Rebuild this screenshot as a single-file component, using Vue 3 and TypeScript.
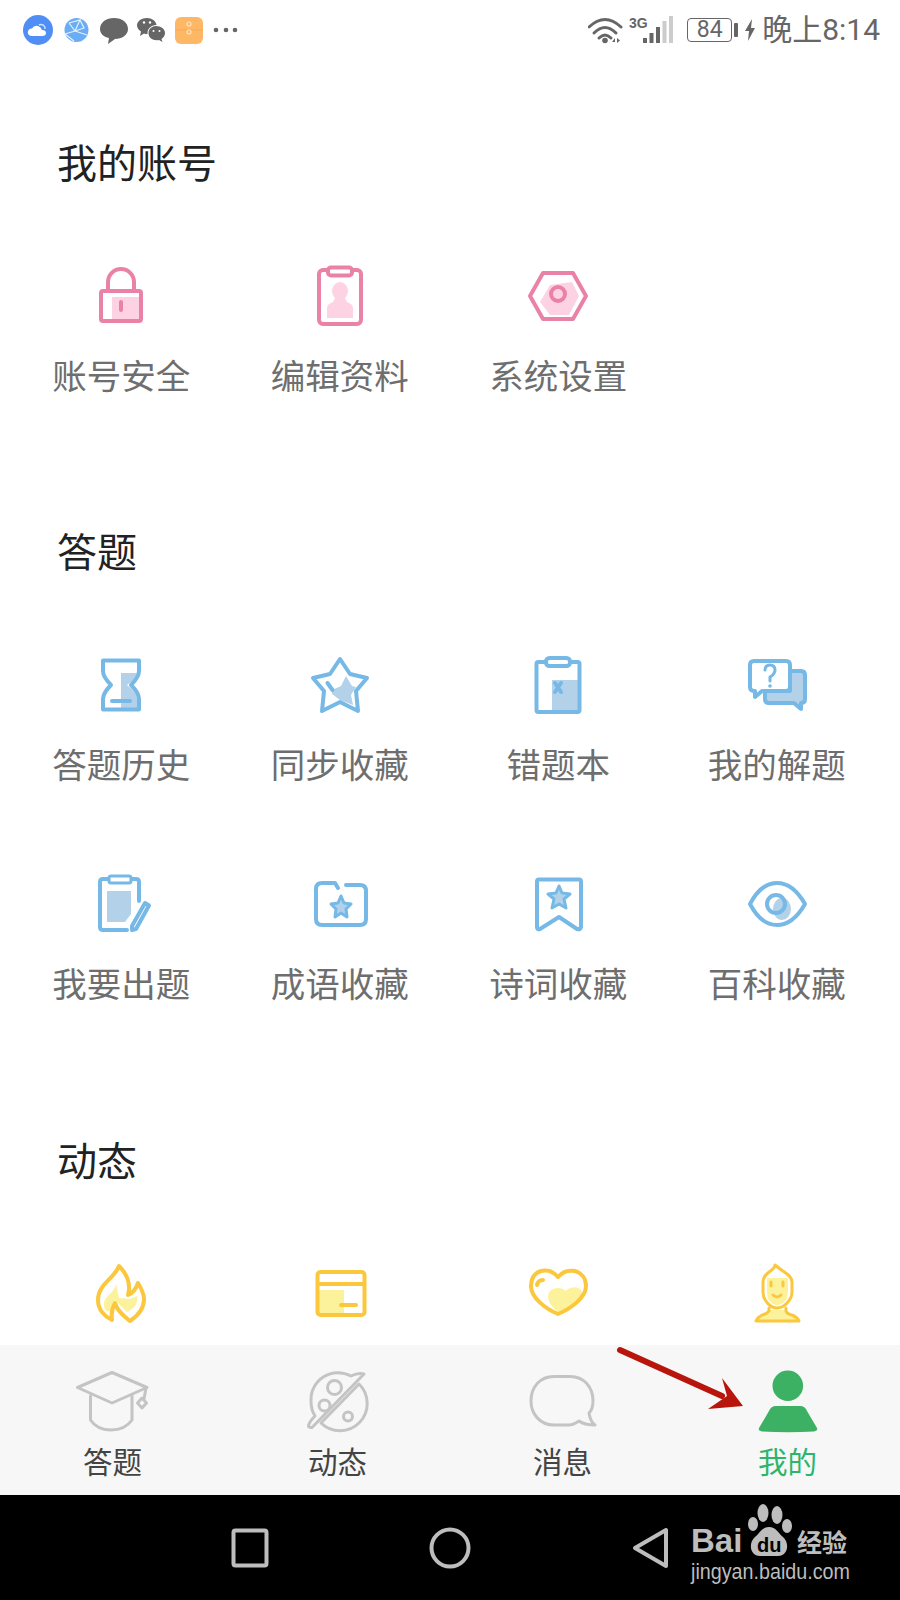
<template>
  <div class="phone">
    <div class="status-bar">
      <svg width="30" height="30" viewBox="0 0 30 30">
        <circle cx="15" cy="15" r="15" fill="#4f8ff5" />
        <path d="M8 21 Q4 20 5 16 Q6 13 9 13.500 Q11 10 15 11 Q18 12 19 15 Q23 15 23 18 Q23 21 19 21 Z" fill="#fff" />
        <path d="M16 10 A4 4 0 0 1 22 14" fill="none" stroke="#cfe0fb" stroke-width="1.500" />
      </svg>
      <svg width="30" height="30" viewBox="0 0 30 30">
        <circle cx="15.500" cy="15" r="12" fill="#6badf5" />
        <path d="M8 8 L19 5 L14 16 L26 20 M14 16 L4 19 L13 26 M19 5 L23 13 L14 16 M8 8 L14 16" fill="none" stroke="#e3f0fd" stroke-width="1.200" />
      </svg>
      <svg width="30" height="30" viewBox="0 0 30 30">
        <path d="M15 3 C23 3 29 7.500 29 14 C29 20 23 24 16 24 L9 29 L10 23 C4 22 1 18 1 14 C1 7.500 7 3 15 3 Z" fill="#666" />
      </svg>
      <svg width="28" height="30" viewBox="0 0 28 30">
        <path d="M10 3 C15 3 19 6 19.500 10 C14 10 10 14 10.500 19 C9 19 8 19 7 18.500 L3 21 L4 16.500 C1.500 15 0 12.500 0 10.500 C0 6 4.500 3 10 3 Z" fill="#666" />
        <path d="M19 11 C24 11 28 14 28 18 C28 20.500 26.500 22.500 24.500 24 L25.500 27 L22 25 C16 26 11.500 23 11.500 18 C11.500 14 15 11 19 11 Z" fill="#666" />
        <circle cx="7" cy="7.500" r="1.200" fill="#fff" /><circle cx="13" cy="7.500" r="1.200" fill="#fff" />
        <circle cx="16.500" cy="16" r="1" fill="#fff" /><circle cx="22.500" cy="16" r="1" fill="#fff" />
      </svg>
      <svg width="30" height="30" viewBox="0 0 30 30">
        <rect x="2" y="2" width="28" height="27" rx="6" fill="#fdb765" />
        <path d="M2 15 H30" stroke="#f7aa52" stroke-width="1" />
        <circle cx="16" cy="9" r="2" fill="none" stroke="#ffe3bf" stroke-width="1.200" />
        <circle cx="16" cy="17" r="2" fill="none" stroke="#ffe3bf" stroke-width="1.200" />
      </svg>
      <svg width="30" height="30" viewBox="0 0 30 30">
        <circle cx="5" cy="15" r="2.300" fill="#666" /><circle cx="15" cy="15" r="2.300" fill="#666" /><circle cx="24" cy="15" r="2.300" fill="#666" />
      </svg>

      <div class="status-right">
        <svg width="36" height="30" viewBox="0 0 36 30">
          <g fill="none" stroke="#666" stroke-width="3" stroke-linecap="round">
            <path d="M1 12 Q17 -3 33 12" />
            <path d="M6 18 Q17 7 28 18" />
            <path d="M11 23 Q17 17 23 23" />
          </g>
          <circle cx="17" cy="25.500" r="2.800" fill="#666" />
          <path d="M24 27 L27 23 V27 Z M29 23 L32 25.500 L29 28 Z" fill="#666" />
        </svg>
        <svg class="signal" width="46" height="30" viewBox="0 0 46 30">
          <text x="0" y="13" class="net-type">3G</text>
          <g fill="#666">
            <rect x="14" y="23" width="4" height="5" />
            <rect x="20.500" y="18" width="4" height="10" />
            <rect x="27" y="12" width="4" height="16" />
          </g>
          <g fill="#ccc">
            <rect x="33.500" y="6" width="4" height="22" />
            <rect x="40" y="1" width="4" height="27" />
          </g>
        </svg>
        <div class="battery">84</div>
        <div class="battery-nub"></div>
        <svg class="bolt" width="10" height="22" viewBox="0 0 10 22">
          <path d="M7 0 L0 12 H4 L3 22 L10 9 H6 Z" fill="#666" />
        </svg>
        <span class="clock">晚上8:14</span>
      </div>
    </div>

    <div class="content">
      <section class="section pink">
        <h2 class="section-title">我的账号</h2>
        <div class="grid">
          <div class="item">
            <svg class="icon" viewBox="0 0 64 64">
              <rect class="soft" x="23" y="33" width="29" height="24" />
              <path class="line" d="M19 27 V18 A13 13 0 0 1 45 18 V27" />
              <rect class="line" x="12" y="27" width="40" height="30" rx="2" />
              <path class="line" d="M32 38 V46" />
            </svg>
            <span class="label">账号安全</span>
          </div>
          <div class="item">
            <svg class="icon" viewBox="0 0 64 64">
              <rect class="line" x="11" y="6" width="42" height="54" rx="4" />
              <rect class="line white" x="20" y="3.500" width="24" height="8" rx="3" />
              <ellipse class="soft" cx="32" cy="27" rx="8" ry="9" />
              <path class="soft" d="M19 54 V44 Q19 40 25 38 L27 34 H37 L39 38 Q45 40 45 44 V54 Z" />
            </svg>
            <span class="label">编辑资料</span>
          </div>
          <div class="item">
            <svg class="icon" viewBox="0 0 64 64">
              <path class="soft" d="M14 38 L24 21 L46 18 L53 32 L43 51 L24 51 Z" />
              <polygon class="line" points="4,32 17,9 47,9 60,32 47,55 17,55" />
              <circle class="line" cx="32" cy="30" r="7" />
            </svg>
            <span class="label">系统设置</span>
          </div>
        </div>
      </section>

      <section class="section blue">
        <h2 class="section-title">答题</h2>
        <div class="grid">
          <div class="item">
            <svg class="icon" viewBox="0 0 64 64">
              <path class="soft" d="M32 20 H48 Q47 26 38 32 Q48 40 48 46 V55 H32 Z" />
              <path class="line" d="M14 7.500 H50 V18 Q50 24 42 32 Q50 40 50 46 V56.500 H14 V46 Q14 40 22 32 Q14 24 14 18 Z" />
              <path class="line" d="M23 48 H41" />
            </svg>
            <span class="label">答题历史</span>
          </div>
          <div class="item">
            <svg class="icon" viewBox="0 0 64 64">
              <polygon class="soft" points="38,23 44,33 48,34 43,42 45,52 32,47 24,41 24,37 33,33" />
              <polygon class="line" points="32,6 42,21 59,25 48,38 50,58 32,49 14,58 16,38 5,25 22,21" />
              <path class="line" d="M19.500 30 L24.500 37" />
            </svg>
            <span class="label">同步收藏</span>
          </div>
          <div class="item">
            <svg class="icon" viewBox="0 0 64 64">
              <rect class="soft" x="26" y="27" width="27" height="31" />
              <rect class="line" x="10.500" y="9" width="43" height="50" rx="2" />
              <rect class="line white" x="20" y="5" width="24" height="8" rx="3.500" />
              <path class="line" d="M29 30 L35 39 M35 30 L29 39" />
            </svg>
            <span class="label">错题本</span>
          </div>
          <div class="item">
            <svg class="icon" viewBox="0 0 64 64">
              <path class="line fill" d="M45 18 H56 Q60 18 60 22 V46 Q60 50 56 50 V56 L49 50 H24 Q20 50 20 46 V38 H45 Z" />
              <path class="line white" d="M9 8 H41 Q45 8 45 12 V34 Q45 38 41 38 H17 L10 44 V38 Q5 38 5 34 V12 Q5 8 9 8 Z" />
              <path class="line thin" d="M20 17 Q20 12 25 12 Q30 12 30 17 Q30 21 25 24 V28" />
              <circle cx="25" cy="33" r="1.800" fill="#76b9e6" />
            </svg>
            <span class="label">我的解题</span>
          </div>
          <div class="item">
            <svg class="icon" viewBox="0 0 64 64">
              <path class="soft" d="M18 19 H42 V42 L36 50 H18 Z" />
              <path class="line" d="M50 29 V10 Q50 7 47 7 H14 Q11 7 11 10 V55 Q11 58 14 58 H38" />
              <rect class="line white thin" x="20" y="4" width="22" height="7" rx="2" />
              <path class="line" d="M56 31 L60 33.500 L47 57 L43 58 L43 54 Z" />
            </svg>
            <span class="label">我要出题</span>
          </div>
          <div class="item">
            <svg class="icon" viewBox="0 0 64 64">
              <path class="line" d="M30 16 L27 11 H14 Q8 11 8 17 V47 Q8 53 14 53 H52 Q58 53 58 47 V19 Q58 13 52 13 H38" />
              <polygon class="line fill thin" points="33,24 36,31 43,32 38,37 39,45 33,41 27,45 28,37 23,32 30,31" />
            </svg>
            <span class="label">成语收藏</span>
          </div>
          <div class="item">
            <svg class="icon" viewBox="0 0 64 64">
              <path class="line" d="M13 7.500 H53 Q55 7.500 55 9.500 V55 Q54 58 51 57 L33 45 L14 57 Q11 58 11 55 V9.500 Q11 7.500 13 7.500 Z" />
              <polygon class="line fill thin" points="33,14 36,21 44,22 38,27 40,36 33,32 26,36 28,27 22,22 30,21" />
            </svg>
            <span class="label">诗词收藏</span>
          </div>
          <div class="item">
            <svg class="icon" viewBox="0 0 64 64">
              <path class="line" d="M5 32 Q16 11 32 11 Q48 11 60 32 Q48 53 32 53 Q16 53 5 32 Z" />
              <ellipse class="soft" cx="37" cy="37" rx="9" ry="11" />
              <circle class="line" cx="31" cy="32" r="9" />
            </svg>
            <span class="label">百科收藏</span>
          </div>
        </div>
      </section>

      <section class="section yellow last">
        <h2 class="section-title">动态</h2>
        <div class="grid">
          <div class="item">
            <svg class="icon" viewBox="0 0 64 64">
              <path class="soft" d="M27 22 C25 32 14 34 15 44 C16 50 20 50 24 48 L26 38 L38 50 C46 46 49 42 48 34 L41 37 L30 36 Z" />
              <path class="line" d="M30 4 C26 16 9 22 9 38 C9 48 16 55 23 58 C22 51 23 46 26 41 C28 49 35 54 41 59 C50 53 55 46 55 37 C55 31 52 26 49 21 C47 27 44 31 39 33 C42 22 38 12 30 4 Z" />
            </svg>
          </div>
          <div class="item">
            <svg class="icon" viewBox="0 0 64 64">
              <rect class="soft" x="11" y="28" width="25" height="24" />
              <rect class="line" x="9.500" y="10" width="47" height="43" rx="3" />
              <path class="line" d="M10 22 H56 M33 43 H48" />
            </svg>
          </div>
          <div class="item">
            <svg class="icon" viewBox="0 0 64 64">
              <path class="soft" d="M40 29 C36 25 28 25 24 29 C20 34 22 42 32 50 C42 47 57 38 56 30 C54 24 44 24 40 29 Z" />
              <path class="line" d="M32 15 C27 9 20 8 15 9 C8 11 5 17 5 24 C5 36 20 47 32 52 C44 47 60 36 60 24 C60 17 56 11 49 9 C43 8 37 9 32 15 Z" />
              <path class="line" d="M11 23 Q12 18 17 18" />
            </svg>
          </div>
          <div class="item">
            <svg class="icon" viewBox="0 0 64 64">
              <path class="soft" d="M24 48 Q22 52 17 54 Q13 55 12 58 H53 Q52 55 47 54 Q42 52 41 48 Z" />
              <path class="soft" d="M22 16 H43 V30 C43 38 38 43 32 43 C26 43 22 38 22 30 Z" />
              <path class="line thin" d="M30 3 C30 9 18 10 18 20 V30 C18 38 25 46 32 46 C39 46 47 38 47 30 V20 C47 13 38 10 30 3 Z" />
              <path class="line thin" d="M24 46 V49 Q22 52 17 53 Q13 55 11 59 H54 Q52 55 47 53 Q42 52 41 49 V46" />
              <path class="line thin" d="M26 20 V24 M38 20 V24 M28 33 Q32 37 36 33" />
            </svg>
          </div>
        </div>
      </section>
    </div>

    <nav class="tab-bar">
      <div class="tab">
        <svg class="tab-icon" viewBox="0 0 80 64">
          <g class="tab-line">
            <path d="M39 2.500 L74 17.500 L39 33 L4.500 17.500 Z" />
            <path d="M17.500 26 V50 Q24 60 38 60 Q52 60 59 50 V26" />
            <path d="M73 18 L71 29" />
            <path d="M69 28 L73.500 33 L69 38 L64.500 33 Z" />
          </g>
        </svg>
        <span class="tab-label">答题</span>
      </div>
      <div class="tab">
        <svg class="tab-icon" viewBox="0 0 80 64">
          <g class="tab-line">
            <path d="M66 4 Q60 2.500 53 6 A27 27 0 0 0 13 31 Q13 40 17 46 Q11 52 10.500 56 Q11 58 14 57.500 Z" />
            <path d="M61 14 A27 27 0 0 1 23 53 Z" />
            <circle cx="36.500" cy="17.500" r="7" />
            <circle cx="26.500" cy="35.500" r="5.500" />
            <circle cx="50" cy="46.500" r="4.500" />
          </g>
        </svg>
        <span class="tab-label">动态</span>
      </div>
      <div class="tab">
        <svg class="tab-icon" viewBox="0 0 80 64">
          <path class="tab-line" d="M31 6.500 H47 C61 6.500 70 17 70 31 C70 36 69 40 66 43 C67 49 69 53 72 55 C66 55 60 54 56 51 C53 53 50 55 46 55 H31 C17 55 8 44 8 31 C8 17 17 6.500 31 6.500 Z" />
        </svg>
        <span class="tab-label">消息</span>
      </div>
      <div class="tab active">
        <svg class="tab-icon" viewBox="0 0 80 64">
          <circle cx="39.800" cy="15.700" r="15.300" fill="#3cb163" />
          <path d="M28 36 H52 Q57 36 59 41 L69 58 Q70 61 66 61.500 Q40 63 14 61.500 Q10 61 11 58 L21 41 Q23 36 28 36 Z" fill="#3cb163" />
        </svg>
        <span class="tab-label">我的</span>
      </div>
    </nav>

    <div class="system-nav">
      <svg width="60" height="60" viewBox="0 0 60 60">
        <rect x="13.500" y="12.500" width="33" height="35" rx="2" class="nav-line" />
      </svg>
      <svg width="60" height="60" viewBox="0 0 60 60">
        <circle cx="30" cy="30" r="18.500" class="nav-line" />
      </svg>
      <svg width="60" height="60" viewBox="0 0 60 60">
        <path d="M15 30 L46 12 V48 Z" class="nav-line" />
      </svg>
    </div>

    <!-- annotation drawn over the screenshot -->
    <svg class="arrow" width="150" height="80" viewBox="0 0 150 80">
      <path d="M10 10 L112 56" stroke="#b8160c" stroke-width="6" stroke-linecap="round" />
      <path d="M112 38 L133 66 L98 69 L117 56 Z" fill="#b8160c" />
    </svg>

    <svg class="watermark" width="180" height="90" viewBox="0 0 180 90">
      <text x="11" y="52" class="wm-bai">Bai</text>
      <g fill="#bdbdbd">
        <ellipse cx="83" cy="13" rx="5.500" ry="9" />
        <ellipse cx="97" cy="15" rx="5.500" ry="9" />
        <ellipse cx="73" cy="24" rx="5" ry="7" />
        <ellipse cx="107" cy="26" rx="5" ry="7" />
        <path d="M89 27 C96 27 98 33 103 37 C110 43 108 56 98 56 H80 C70 56 68 43 75 37 C80 33 82 27 89 27 Z" />
      </g>
      <text x="77" y="52" class="wm-du">du</text>
      <text x="117" y="52" class="wm-cn">经验</text>
      <text x="11" y="79" class="wm-url" textLength="159" lengthAdjust="spacingAndGlyphs">jingyan.baidu.com</text>
    </svg>
  </div>
</template>

<script setup lang="ts">
// static screen, nothing to load
</script>

<style>
html,
body {
  margin: 0;
  background: #fff;
}
</style>

<style scoped>
.phone {
  position: relative;
  display: flex;
  flex-direction: column;
  width: 900px;
  height: 1600px;
  overflow: hidden;
  background: #fff;
  font-family: "Noto Sans CJK SC", "Noto Sans", sans-serif;
}

.status-bar {
  display: flex;
  align-items: center;
  flex: none;
  gap: 8px;
  height: 60px;
  padding: 0 20px 0 23px;
}
.status-bar svg { display: block; flex: none; }
.status-right {
  display: flex;
  align-items: center;
  margin-left: auto;
}
.signal { margin-left: 5px; }
.net-type { font: bold 14px "Liberation Sans", sans-serif; fill: #666; }
.battery {
  box-sizing: border-box;
  width: 45px;
  height: 24px;
  margin-left: 12px;
  border: 1.5px solid #666;
  border-radius: 4px;
  color: #666;
  font: 23px/21px Roboto, sans-serif;
  text-align: center;
}
.battery-nub {
  width: 4px;
  height: 14px;
  margin-left: 2px;
  background: #666;
  border-radius: 1px;
}
.bolt { margin-left: 7px; }
.clock {
  margin-left: 7px;
  color: #666;
  font: 30px/40px Roboto, "Noto Sans CJK SC", sans-serif;
}

.content {
  flex: 1;
  min-height: 0;
  overflow: hidden;
}

.section { padding-top: 126px; }
.section:first-child { padding-top: 73px; }
.section.last { padding-top: 127px; }
.section-title {
  margin: 0;
  padding-left: 57px;
  color: #222;
  font-size: 40px;
  font-weight: 400;
  line-height: 56px;
}

.grid {
  display: grid;
  grid-template-columns: repeat(4, 218.5px);
  row-gap: 87px;
  margin-top: 75px;
  padding-left: 12px;
}
.item {
  display: flex;
  flex-direction: column;
  align-items: center;
}
.icon {
  display: block;
  width: 64px;
  height: 64px;
}
.label {
  margin-top: 24px;
  color: #6e6e6e;
  font-size: 34.5px;
  line-height: 44px;
  white-space: nowrap;
}

.line {
  fill: none;
  stroke-width: 4;
  stroke-linecap: round;
  stroke-linejoin: round;
}
.line.white { fill: #fff; }
.line.thin { stroke-width: 3; }
.pink .line { stroke: #ea82a8; }
.pink .soft { fill: #fdd3e4; }
.blue .line { stroke: #76b9e6; }
.blue .soft,
.blue .line.fill { fill: #b3d2ea; }
.yellow .line { stroke: #fbc73c; }
.yellow .soft { fill: #fdf29c; }

.tab-bar {
  display: flex;
  flex: none;
  height: 150px;
  background: #f7f7f7;
}
.tab {
  display: flex;
  flex: 1;
  flex-direction: column;
  align-items: center;
  padding-top: 25px;
}
.tab-icon {
  display: block;
  width: 80px;
  height: 64px;
}
.tab-line {
  fill: none;
  stroke: #c4c4c4;
  stroke-width: 3;
  stroke-linejoin: round;
  stroke-linecap: round;
}
.tab-label {
  margin-top: 6px;
  color: #444;
  font-size: 29.5px;
  line-height: 40px;
}
.tab.active .tab-label { color: #2db56b; }

.system-nav {
  display: flex;
  flex: none;
  align-items: center;
  justify-content: center;
  gap: 140px;
  height: 105px;
  background: #000;
}
.nav-line {
  fill: none;
  stroke: #bdbdbd;
  stroke-width: 4;
  stroke-linejoin: round;
}

.arrow {
  position: absolute;
  left: 610px;
  top: 1340px;
}
.watermark {
  position: absolute;
  left: 680px;
  top: 1500px;
}
.wm-bai { font: bold 33px "Liberation Sans", sans-serif; fill: #bdbdbd; }
.wm-du { font: bold 20px "Liberation Sans", sans-serif; fill: #000; }
.wm-cn { font: bold 25px "Noto Sans CJK SC", sans-serif; fill: #bdbdbd; }
.wm-url { font: 22px "Liberation Sans", sans-serif; fill: #bdbdbd; }
</style>
